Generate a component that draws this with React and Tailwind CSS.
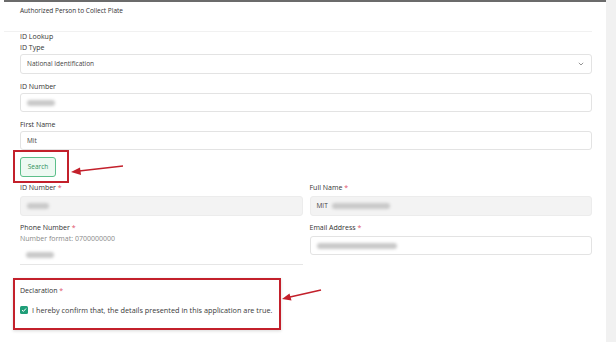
const Label = ({ children, req }) => (
  <div className="text-[7px] leading-[10px] text-[#333]">
    {children}
    {req && <span className="text-[#e0526a]"> *</span>}
  </div>
);

const Blur = ({ w }) => (
  <div className={`h-[6px] ${w} rounded-sm bg-[#c9c9c9] blur-[1.5px]`} />
);

const App = () => {
  return (
    <div
      className="relative w-[616px] h-[342px] overflow-hidden bg-white flex"
      style={{ fontFamily: '"Open Sans", "Noto Sans", sans-serif' }}
    >
      <div className="w-[602px] border-t-2 border-[#6b6b6b] ml-[4px]">
        <div className="h-[30px] border-b border-[#f1f1f1] pt-[4px] pl-4 mr-[14px]">
          <div className="text-[6.5px] leading-[10px] text-[#333]">
            Authorized Person to Collect Plate
          </div>
        </div>
        <div className="pl-4 pr-[14px]">
          <Label>ID Lookup</Label>
          <div className="mt-[1px]">
            <Label>ID Type</Label>
          </div>
          <div className="mt-[1px] h-[20px] rounded-[3px] border border-[#e3e3e3] flex items-center justify-between px-[6px]">
            <span className="text-[6.5px] text-[#444]">National Identification</span>
            <svg width="6" height="4" viewBox="0 0 6 4" className="mr-[1px]">
              <path d="M0.8 0.8 L3 3 L5.2 0.8" fill="none" stroke="#888" strokeWidth="0.9" />
            </svg>
          </div>
          <div className="mt-[8px]">
            <Label>ID Number</Label>
          </div>
          <div className="mt-[1px] h-[19px] rounded-[3px] border border-[#e3e3e3] flex items-center px-[6px]">
            <Blur w="w-[28px]" />
          </div>
          <div className="mt-[8px]">
            <Label>First Name</Label>
          </div>
          <div className="mt-[1px] h-[19px] rounded-[3px] border border-[#e3e3e3] flex items-center px-[6px]">
            <span className="text-[6.5px] text-[#444]">Mit</span>
          </div>
          <button
            type="button"
            className="mt-[7px] h-[20px] w-[36px] rounded-[3px] border border-[#5cbf8a] bg-[#edf9f2] text-[6.5px] text-[#2f8f5b] flex items-center justify-center"
          >
            Search
          </button>

          <div className="mt-[6px] grid grid-cols-2 gap-x-[7px]">
            <div>
              <Label req>ID Number</Label>
              <div className="mt-[3px] h-[20px] rounded-[3px] border border-[#ececec] bg-[#f3f3f3] flex items-center px-[6px]">
                <Blur w="w-[22px]" />
              </div>
            </div>
            <div>
              <Label req>Full Name</Label>
              <div className="mt-[3px] h-[20px] rounded-[3px] border border-[#ececec] bg-[#f3f3f3] flex items-center gap-[4px] px-[6px]">
                <span className="text-[6.5px] text-[#444]">MIT</span>
                <Blur w="w-[58px]" />
              </div>
            </div>
            <div className="mt-[7px]">
              <Label req>Phone Number</Label>
              <div className="mt-[1px] text-[7px] leading-[10px] text-[#8a8a8a]">
                Number format: 0700000000
              </div>
              <div className="mt-[2px] h-[19px] border-b border-[#e6e6e6] flex items-center px-[6px]">
                <Blur w="w-[28px]" />
              </div>
            </div>
            <div className="mt-[7px]">
              <Label req>Email Address</Label>
              <div className="mt-[3px] h-[19px] rounded-[3px] border border-[#e3e3e3] flex items-center px-[6px]">
                <Blur w="w-[80px]" />
              </div>
            </div>
          </div>

          <div className="mt-[21px]">
            <Label req>Declaration</Label>
          </div>
          <div className="mt-[9px] flex items-center gap-[4px]">
            <div className="w-[8px] h-[8px] rounded-[1.5px] bg-[#1f9e78] flex items-center justify-center">
              <svg width="6" height="6" viewBox="0 0 6 6">
                <path d="M1 3.1 L2.4 4.4 L5 1.5" fill="none" stroke="white" strokeWidth="1" />
              </svg>
            </div>
            <span className="text-[7.3px] leading-[10px] text-[#3a3a3a]">
              I hereby confirm that, the details presented in this application are true.
            </span>
          </div>
        </div>
      </div>
      <div className="w-[10px] bg-[#f1f1f1]" />

      <div className="absolute left-[13px] top-[150px] w-[56px] h-[33px] border-2 border-[#c3202b]" />
      <div className="absolute left-[13px] top-[278px] w-[268px] h-[52px] border-2 border-[#c3202b] shadow-[0_1px_3px_rgba(0,0,0,0.15)]" />

      <svg className="absolute left-0 top-0" width="616" height="342" viewBox="0 0 616 342">
        <line x1="123" y1="166" x2="79" y2="171" stroke="#c3202b" strokeWidth="1.6" />
        <polygon points="71,172 80,167.5 81,175" fill="#c3202b" />
        <line x1="321" y1="290" x2="290" y2="297" stroke="#c3202b" strokeWidth="1.6" />
        <polygon points="282,299 289.5,293.5 291.5,300.5" fill="#c3202b" />
      </svg>
    </div>
  );
};

export default App;
